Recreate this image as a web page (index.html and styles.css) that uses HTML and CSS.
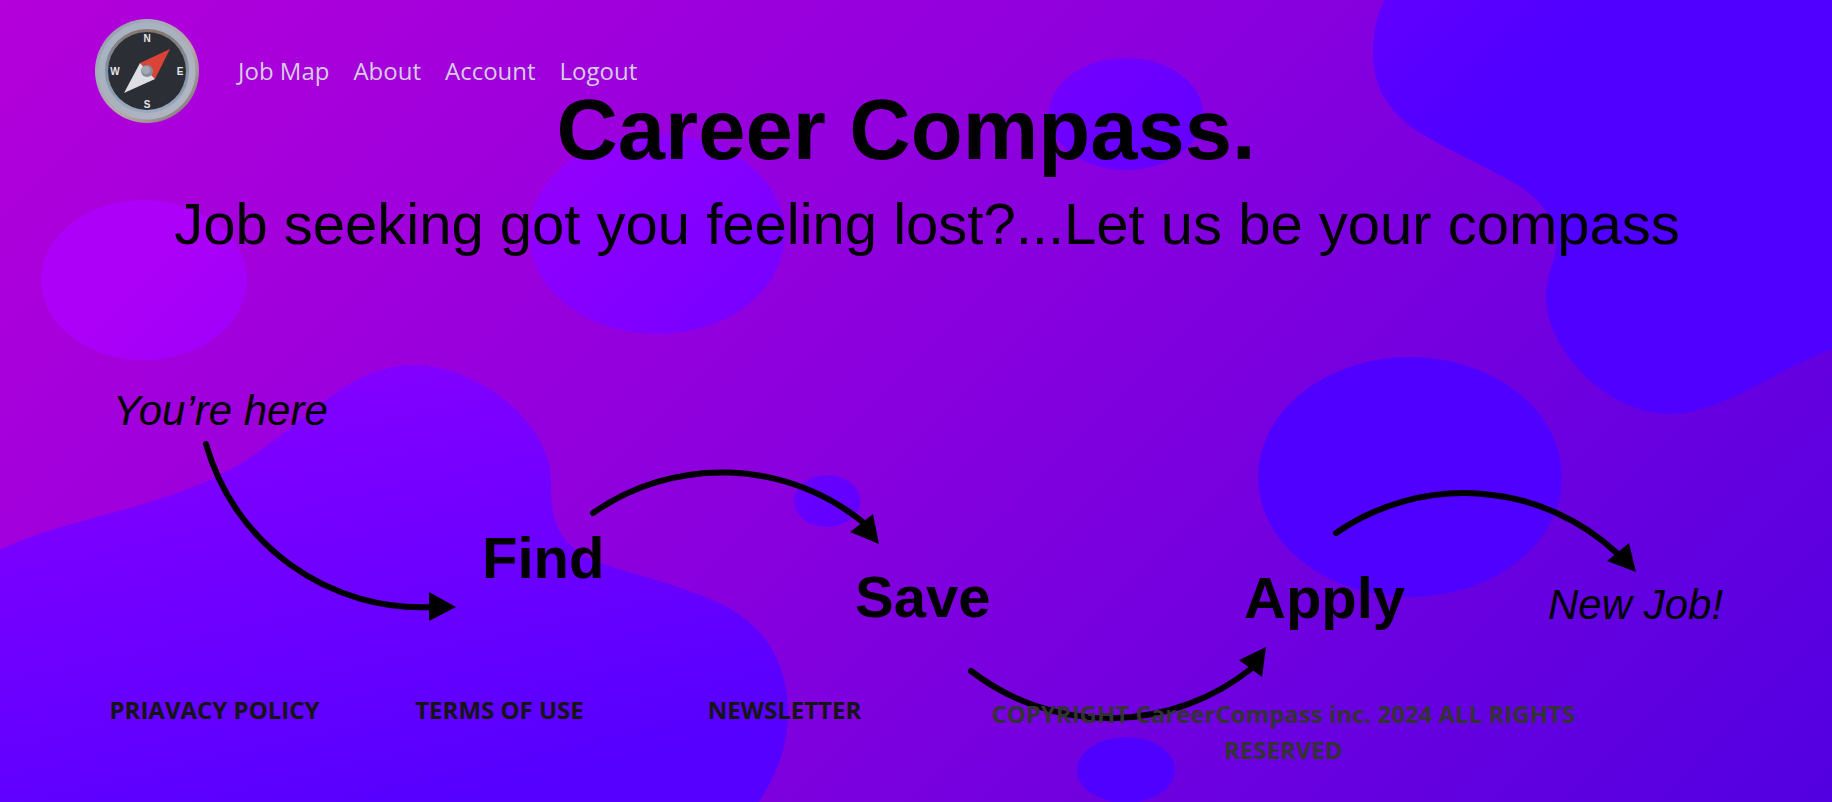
FILE: index.html
```
<!DOCTYPE html>
<html lang="en">
<head>
<meta charset="utf-8">
<meta name="viewport" content="width=device-width, initial-scale=1">
<title>Career Compass</title>
<link rel="stylesheet" href="styles.css">
</head>
<body>
<svg class="backdrop" viewBox="0 0 1832 802" preserveAspectRatio="none" aria-hidden="true">
  <defs>
    <linearGradient id="base" gradientUnits="userSpaceOnUse" x1="0" y1="0" x2="1317" y2="1317">
      <stop offset="0" stop-color="#b400da"/>
      <stop offset="0.5" stop-color="#8800de"/>
      <stop offset="1" stop-color="#5200e1"/>
    </linearGradient>
    <linearGradient id="bubble" gradientUnits="userSpaceOnUse" x1="210" y1="210" x2="800" y2="800">
      <stop offset="0" stop-color="#ac00f8"/>
      <stop offset="0.4" stop-color="#8500ff"/>
      <stop offset="1" stop-color="#5000ff"/>
    </linearGradient>
    <linearGradient id="wave" gradientUnits="userSpaceOnUse" x1="350" y1="360" x2="450" y2="800">
      <stop offset="0" stop-color="#8400ff"/>
      <stop offset="1" stop-color="#5600ff"/>
    </linearGradient>
  </defs>
  <rect width="1832" height="802" fill="url(#base)"/>
  <path fill="url(#wave)" d="M0 550C60 520 150 510 220 475C300 435 340 365 414 365C480 365 551 425 551 480C551 510 551 545 601 563C630 574 680 584 723 605C770 628 788 670 788 712C788 745 778 772 759 802H0Z"/>
  <g fill="url(#bubble)">
    <path d="M1384 0C1376 17 1373 34 1373 52C1373 92 1393 116 1422 134C1444 148 1500 173 1522 188C1545 204 1556 222 1556 245C1556 262 1546 272 1546 297C1546 350 1608 414 1669 414C1722 414 1775 370 1832 349V0Z"/>
    <ellipse cx="144" cy="280" rx="103" ry="80"/>
    <ellipse cx="657" cy="234" rx="128" ry="100"/>
    <ellipse cx="1126" cy="114" rx="77" ry="56"/>
    <ellipse cx="1410" cy="477" rx="152" ry="120"/>
    <ellipse cx="827" cy="501" rx="33" ry="26"/>
    <ellipse cx="1126" cy="770" rx="49" ry="33"/>
  </g>
</svg>

<header class="topbar">
  <a class="brand" href="#" aria-label="Career Compass home">
    <svg class="brand-logo" viewBox="0 0 106 106" aria-hidden="true">
      <defs>
        <linearGradient id="rim" x1="0" y1="0" x2="1" y2="1">
          <stop offset="0" stop-color="#8b8f96"/>
          <stop offset="0.25" stop-color="#a3adba"/>
          <stop offset="0.6" stop-color="#b5a9a6"/>
          <stop offset="1" stop-color="#77716f"/>
        </linearGradient>
        <linearGradient id="bevel" x1="0" y1="0" x2="1" y2="1">
          <stop offset="0" stop-color="#a6b4c4"/>
          <stop offset="0.5" stop-color="#a9b1be"/>
          <stop offset="1" stop-color="#b3b6c4"/>
        </linearGradient>
        <linearGradient id="lip" x1="0" y1="0" x2="0" y2="1">
          <stop offset="0" stop-color="#85776f"/>
          <stop offset="0.5" stop-color="#8391a3"/>
          <stop offset="1" stop-color="#98aabf"/>
        </linearGradient>
      </defs>
      <circle cx="53" cy="53" r="52" fill="url(#rim)"/>
      <circle cx="53" cy="53" r="45" fill="none" stroke="url(#bevel)" stroke-width="7"/>
      <circle cx="53" cy="53" r="40" fill="none" stroke="url(#lip)" stroke-width="4"/>
      <circle cx="53" cy="53" r="39" fill="#2b2e34"/>
      <path d="M76 31L46 45L61 61Z" fill="#d94436"/>
      <path d="M30 75L46 45L61 61Z" fill="#dedfe4"/>
      <circle cx="53" cy="53" r="6" fill="#868d9a"/>
      <circle cx="52" cy="52" r="4" fill="#a3a9b4"/>
      <g class="brand-points">
        <text x="53" y="24">N</text>
        <text x="86" y="57">E</text>
        <text x="53" y="90">S</text>
        <text x="21" y="57">W</text>
      </g>
    </svg>
  </a>
  <nav class="menu" aria-label="Main">
    <a href="#">Job Map</a>
    <a href="#">About</a>
    <a href="#">Account</a>
    <a href="#">Logout</a>
  </nav>
</header>

<main class="hero">
  <h1 class="title">Career Compass.</h1>
  <p class="tagline">Job seeking got you feeling lost?...Let us be your compass</p>
  <svg class="journey" viewBox="0 0 1832 400" role="img" aria-label="Steps from here to a new job">
    <g class="arrow">
      <path d="M206 104A224 224 0 0 0 432 267"/>
      <path d="M593 173A225 225 0 0 1 864 183"/>
      <path d="M971 331A227 227 0 0 0 1252 328"/>
      <path d="M1336 193A225 225 0 0 1 1618 214"/>
    </g>
    <path d="M429 252L456 267L429 281ZM873 174L879 204L850 192ZM1239 320L1266 307L1262 337ZM1629 203L1636 232L1607 221Z"/>
    <text class="stage" x="113" y="85">You’re here</text>
    <text class="step" x="482" y="238">Find</text>
    <text class="step" x="855" y="277">Save</text>
    <text class="step" x="1244" y="278">Apply</text>
    <text class="stage" x="1548" y="279">New Job!</text>
  </svg>
</main>

<footer class="footer">
  <a href="#">PRIAVACY POLICY</a>
  <a href="#">TERMS OF USE</a>
  <a href="#">NEWSLETTER</a>
  <p class="copyright">COPYRIGHT CareerCompass inc. 2024 ALL RIGHTS RESERVED</p>
</footer>
</body>
</html>
```
FILE: styles.css
```
* {
  box-sizing: border-box;
}

body {
  margin: 0;
  min-height: 100vh;
  position: relative;
  overflow: hidden;
  font-family: "Open Sans", "Noto Sans", sans-serif;
  font-size: 24px;
  line-height: 36px;
  background: #8800dd;
}

a {
  color: inherit;
  text-decoration: none;
}

.backdrop {
  position: absolute;
  inset: 0;
  width: 100%;
  height: 100%;
  z-index: -1;
}

/* The bar floats over the heading */
.topbar {
  position: absolute;
  top: 0;
  left: 0;
  display: flex;
  align-items: center;
  gap: 38px;
  padding: 18px 94px;
}

.brand,
.brand-logo {
  display: block;
  width: 106px;
  height: 106px;
}

.brand-points {
  font: bold 10px "Liberation Sans", Arial, sans-serif;
  fill: #e6e6ea;
  text-anchor: middle;
}

.menu {
  display: flex;
  gap: 24px;
  color: #d6cce6;
}

.hero {
  padding-top: 90px;
  font-family: "Liberation Sans", Arial, sans-serif;
  color: #000;
}

.title,
.tagline {
  margin: 0;
  text-align: center;
}

.title {
  padding-right: 20px;
  font-size: 85px;
  font-weight: bold;
  line-height: 80px;
}

.tagline {
  padding: 10px 0 0 22px;
  font-size: 58px;
  line-height: 88px;
}

.journey {
  display: block;
  width: 100%;
  margin-top: 72px;
}

.arrow {
  fill: none;
  stroke: #000;
  stroke-width: 6;
  stroke-linecap: round;
}

.step {
  font-size: 58px;
  font-weight: bold;
}

.stage {
  font-size: 42px;
  font-style: italic;
}

.footer {
  position: absolute;
  left: 0;
  right: 0;
  bottom: 34px;
  display: grid;
  grid-template-columns: 2fr 2fr 2fr 5fr 1fr;
  padding: 0 50px 0 72px;
  font-weight: bold;
  text-align: center;
  color: #151515;
}

.copyright {
  margin: 0;
  padding: 4px 48px 0;
  color: #333;
}
```
